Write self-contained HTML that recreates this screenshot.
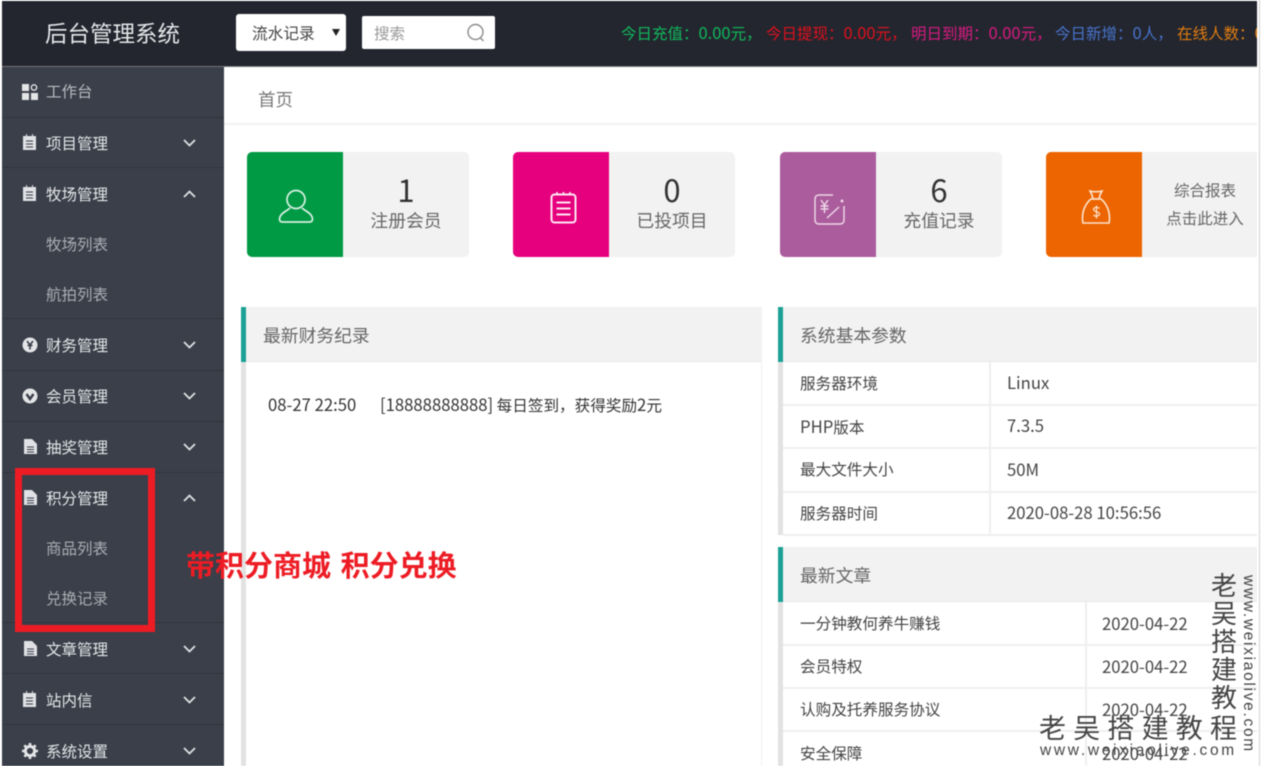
<!DOCTYPE html>
<html lang="zh-CN">
<head>
<meta charset="utf-8">
<title>后台管理系统</title>
<style>
html,body{margin:0;padding:0;background:#fff;width:1264px;height:766px;overflow:hidden}
body{position:relative;font-family:"Liberation Sans","Noto Sans CJK SC",sans-serif;color:#444;filter:blur(.4px)}
.a{position:absolute;white-space:nowrap}
.cjk{font-family:"Noto Sans CJK SC","Liberation Sans",sans-serif}
#side{left:2px;top:67px;width:222px;height:699px;background:#3a3f49}
.sep{position:absolute;left:2px;width:222px;height:1px;background:#31353e}
.m{position:absolute;left:46px;font-size:15.5px;line-height:20px;color:#e4e6e9;font-family:"Noto Sans CJK SC",sans-serif;white-space:nowrap}
.s{color:#a9adb3}
.ic{position:absolute;left:22px}
.ch{position:absolute;left:183px}
.card{position:absolute;top:152px;height:105px;width:222px;background:#f2f2f2;border-radius:5px;overflow:hidden}
.card .c{position:absolute;left:0;top:0;width:96px;height:105px}
.num{position:absolute;left:96px;width:126px;top:19px;text-align:center;font-size:31px;line-height:36px;color:#333;font-family:"Noto Sans CJK SC",sans-serif}
.lab{position:absolute;left:96px;width:126px;top:56px;text-align:center;font-size:17.8px;line-height:24px;color:#666;font-family:"Noto Sans CJK SC",sans-serif}
.ph{position:absolute;height:54px;top:307px;background:#f2f2f2;border-bottom:1px solid #e8e8e8}
.tb{position:absolute;width:5px;background:#1aa094}
.gb{position:absolute;width:5px;background:#e2e2e2}
.pt{position:absolute;font-size:17.8px;line-height:24px;color:#666;font-family:"Noto Sans CJK SC",sans-serif;white-space:nowrap}
.hl{position:absolute;height:2px;background:#efefef}
.vl{position:absolute;width:2px;background:#efefef}
.t{position:absolute;font-size:15.6px;line-height:20px;color:#444;white-space:nowrap;font-family:"Noto Sans CJK SC",sans-serif}
.n{font-size:16.7px}
.st{position:absolute;top:21px;font-size:15.5px;line-height:22px;white-space:nowrap;font-family:"Noto Sans CJK TC",sans-serif}
.st b{font-weight:400;font-size:16.5px}
.wm{position:absolute;color:#444;white-space:nowrap;font-family:"Noto Sans CJK SC",sans-serif}
</style>
</head>
<body>
<!-- header -->
<div class="a" style="left:2px;top:1px;width:1255px;height:65px;background:#23262f;border-bottom:1px solid #777"></div>
<div class="a cjk" style="left:45px;top:17px;font-size:22.5px;line-height:32px;color:#e6e7e9">后台管理系统</div>
<div class="a" style="left:236px;top:14px;width:110px;height:37px;background:#fff;border-radius:3px"></div>
<div class="a cjk" style="left:252px;top:22px;font-size:15.7px;line-height:22px;color:#444">流水记录</div>
<svg class="a" style="left:332px;top:29px" width="8" height="7"><path d="M0 0H8L4 7Z" fill="#222"/></svg>
<div class="a" style="left:362px;top:16px;width:133px;height:33px;background:#fff;border-radius:2px"></div>
<div class="a cjk" style="left:374px;top:23px;font-size:15.5px;line-height:20px;color:#999">搜索</div>
<svg class="a" style="left:466px;top:22px" width="20" height="21" fill="none" stroke="#8c8c8c" stroke-width="1.4"><circle cx="9.5" cy="10" r="7.5"/><path d="M14.5 16l3 3"/></svg>
<div class="st" style="left:621px;color:#11b85c">今日充值：<b>0.00</b>元，</div>
<div class="st" style="left:766px;color:#e0101c">今日提现：<b>0.00</b>元，</div>
<div class="st" style="left:911px;color:#d81a80">明日到期：<b>0.00</b>元，</div>
<div class="st" style="left:1055px;color:#4874cc">今日新增：<b>0</b>人，</div>
<div class="a" style="left:1177px;top:21px;width:80px;height:22px;overflow:hidden"><div class="st" style="left:0;top:0;color:#e07c10">在线人数：<b>0</b>人</div></div>

<!-- sidebar -->
<div class="a" id="side"></div>
<div class="sep" style="top:117px"></div><div class="sep" style="top:167px"></div><div class="sep" style="top:318px"></div><div class="sep" style="top:370px"></div><div class="sep" style="top:421px"></div><div class="sep" style="top:472px"></div><div class="sep" style="top:622px"></div><div class="sep" style="top:673px"></div><div class="sep" style="top:724px"></div>

<svg class="ic" style="top:84px" width="16" height="16" fill="#e4e5e7"><rect x="0" y="0" width="7" height="7"/><circle cx="12" cy="3.5" r="2.7" fill="none" stroke="#e4e5e7" stroke-width="1.4"/><rect x="0" y="9" width="7" height="7"/><rect x="9" y="9" width="7" height="7"/></svg>
<div class="m s" style="top:81px;color:#b8bbc0">工作台</div>

<svg class="ic" style="top:134px" width="15" height="16"><path d="M1 2H14V16H1Z M4 0h1v3H4z M10 0h1v3h-1z" fill="#dfe1e4"/><path d="M4 7h7M4 10h7M4 13h7" stroke="#3a3f49"/></svg>
<div class="m" style="top:133px">项目管理</div>
<svg class="ch" style="top:139px" width="13" height="8" fill="none" stroke="#dfe1e4" stroke-width="1.8"><path d="M1 1l5.5 5.500L12 1"/></svg>

<svg class="ic" style="top:185px" width="15" height="16"><path d="M1 2H14V16H1Z M4 0h1v3H4z M10 0h1v3h-1z" fill="#dfe1e4"/><path d="M4 7h7M4 10h7M4 13h7" stroke="#3a3f49"/></svg>
<div class="m" style="top:184px">牧场管理</div>
<svg class="ch" style="top:190px" width="13" height="8" fill="none" stroke="#dfe1e4" stroke-width="1.8"><path d="M1 7l5.500-5.500L12 7"/></svg>

<div class="m s" style="top:234px">牧场列表</div>
<div class="m s" style="top:284px">航拍列表</div>

<svg class="ic" style="top:337px" width="16" height="16"><circle cx="8" cy="8" r="7.5" fill="#e4e5e7"/><path d="M5 4l3 4 3-4M8 8v4.500M5.500 8.500h5" fill="none" stroke="#3a3f49" stroke-width="1.6"/></svg>
<div class="m" style="top:335px">财务管理</div>
<svg class="ch" style="top:341px" width="13" height="8" fill="none" stroke="#dfe1e4" stroke-width="1.8"><path d="M1 1l5.500 5.500L12 1"/></svg>

<svg class="ic" style="top:388px" width="16" height="16"><circle cx="8" cy="8" r="7.5" fill="#e4e5e7"/><path d="M4.500 6l3.500 5 3.500-5" fill="none" stroke="#3a3f49" stroke-width="2.4"/></svg>
<div class="m" style="top:386px">会员管理</div>
<svg class="ch" style="top:392px" width="13" height="8" fill="none" stroke="#dfe1e4" stroke-width="1.8"><path d="M1 1l5.500 5.500L12 1"/></svg>

<svg class="ic" style="top:439px;left:24px" width="13" height="15"><path d="M0 0H8L13 5V15H0Z" fill="#dfe1e4"/><path d="M3 8h7M3 10.500h7M3 13h7" stroke="#3a3f49"/></svg>
<div class="m" style="top:437px">抽奖管理</div>
<svg class="ch" style="top:443px" width="13" height="8" fill="none" stroke="#dfe1e4" stroke-width="1.8"><path d="M1 1l5.500 5.500L12 1"/></svg>

<svg class="ic" style="top:490px;left:24px" width="13" height="15"><path d="M0 0H8L13 5V15H0Z" fill="#dfe1e4"/><path d="M3 8h7M3 10.500h7M3 13h7" stroke="#3a3f49"/></svg>
<div class="m" style="top:488px">积分管理</div>
<svg class="ch" style="top:494px" width="13" height="8" fill="none" stroke="#dfe1e4" stroke-width="1.8"><path d="M1 7l5.500-5.500L12 7"/></svg>

<div class="m s" style="top:538px">商品列表</div>
<div class="m s" style="top:588px">兑换记录</div>

<svg class="ic" style="top:641px;left:24px" width="13" height="15"><path d="M0 0H8L13 5V15H0Z" fill="#dfe1e4"/><path d="M3 8h7M3 10.500h7M3 13h7" stroke="#3a3f49"/></svg>
<div class="m" style="top:639px">文章管理</div>
<svg class="ch" style="top:645px" width="13" height="8" fill="none" stroke="#dfe1e4" stroke-width="1.8"><path d="M1 1l5.500 5.500L12 1"/></svg>

<svg class="ic" style="top:691px" width="15" height="16"><path d="M1 2H14V16H1Z M4 0h1v3H4z M10 0h1v3h-1z" fill="#dfe1e4"/><path d="M4 7h7M4 10h7M4 13h7" stroke="#3a3f49"/></svg>
<div class="m" style="top:690px">站内信</div>
<svg class="ch" style="top:696px" width="13" height="8" fill="none" stroke="#dfe1e4" stroke-width="1.8"><path d="M1 1l5.500 5.500L12 1"/></svg>

<svg class="ic" style="top:743px" width="16" height="16"><circle cx="8" cy="8" r="4.600" fill="none" stroke="#e4e5e7" stroke-width="3"/><path d="M8 0v16M0 8h16M2.300 2.300l11.400 11.400M13.700 2.300L2.300 13.700" stroke="#e4e5e7" stroke-width="2.600" stroke-dasharray="2.600 10.800"/></svg>
<div class="m" style="top:741px">系统设置</div>
<svg class="ch" style="top:747px" width="13" height="8" fill="none" stroke="#dfe1e4" stroke-width="1.8"><path d="M1 1l5.500 5.500L12 1"/></svg>

<!-- red annotation -->
<div class="a" style="left:15px;top:468px;width:126px;height:150px;border:7px solid #ed1c24"></div>
<div class="a cjk" style="left:186px;top:544px;font-size:29px;line-height:40px;font-weight:700;color:#ed1c24;word-spacing:3px;z-index:3">带积分商城 积分兑换</div>

<!-- breadcrumb -->
<div class="a cjk" style="left:258px;top:87px;font-size:17.5px;line-height:26px;color:#777">首页</div>
<div class="a" style="left:224px;top:123px;width:1033px;height:2px;background:#f1f1f1"></div>

<!-- stat cards -->
<div class="card" style="left:247px"><div class="c" style="background:#009a44"></div>
<svg class="a" style="left:31px;top:36px" width="36" height="36" fill="none" stroke="#d8f0e2" stroke-width="1.700"><circle cx="18" cy="11.500" r="9"/><path d="M12 20c-3 3-10 5-10.500 11 0 2 1 3 3 3h27c2 0 3-1 3-3-.5-6-7.500-8-10.500-11"/></svg>
<div class="num">1</div><div class="lab">注册会员</div></div>

<div class="card" style="left:513px"><div class="c" style="background:#e6007e"></div>
<svg class="a" style="left:37px;top:39px" width="27" height="33" fill="none" stroke="#fde6f3" stroke-width="2"><rect x="1.500" y="3.500" width="24" height="28" rx="3"/><path d="M6.500 11.500h14M6.500 17.500h14M6.500 23.500h14"/><path d="M7 1v3M13.500 1v3M20 1v3" stroke-width="1.600"/></svg>
<div class="num">0</div><div class="lab">已投项目</div></div>

<div class="card" style="left:780px"><div class="c" style="background:#ab5c9c"></div>
<svg class="a" style="left:34px;top:42px" width="32" height="31" fill="none" stroke="#ecd5e7" stroke-width="1.500"><path d="M19 1H5C2.500 1 1 2.500 1 5v21c0 2.500 1.500 4 4 4h21c2.500 0 4-1.500 4-4V12"/><path d="M7 6l3.500 5L14 6M6.500 12h8M6.500 15h8M10.500 11v8M13 24l12-11"/><circle cx="28" cy="7" r=".7"/></svg>
<div class="num">6</div><div class="lab">充值记录</div></div>

<div class="a" style="left:1046px;top:152px;width:211px;height:105px;overflow:hidden"><div class="card" style="left:0;top:0"><div class="c" style="background:#ec6500"></div>
<svg class="a" style="left:35px;top:38px" width="30" height="35" fill="none" stroke="#fde3cf" stroke-width="1.600"><path d="M10 9c-5 4-8.500 11-8.500 19 0 3 .5 5 .5 5h26s.5-2 .5-5c0-8-3.500-15-8.500-19z"/><path d="M9 1c2 1 9 1 12 0l-2 4-1 4h-6l-1-4z"/><path d="M18.500 18.500c-1-1.500-6-1.500-6 1s6 2 6 4.500-5 2.500-6 1M15.500 15.500v13" stroke-width="1.200"/></svg>
<div class="a cjk" style="left:96px;width:126px;top:26px;text-align:center;font-size:15.500px;line-height:24px;color:#666;white-space:normal">综合报表</div>
<div class="a cjk" style="left:96px;width:126px;top:54px;text-align:center;font-size:15.500px;line-height:24px;color:#666;white-space:normal">点击此进入</div></div></div>

<!-- left panel -->
<div class="ph" style="left:241px;width:520px"></div>
<div class="tb" style="left:241px;top:307px;height:55px"></div>
<div class="gb" style="left:241px;top:362px;height:404px"></div>
<div class="a" style="left:761px;top:307px;width:1px;height:459px;background:#f0f0f0"></div>
<div class="pt" style="left:263px;top:323px">最新财务纪录</div>
<div class="t n" style="left:268px;top:394px;color:#333">08-27 22:50</div>
<div class="t" style="left:380px;top:394px;color:#333"><span class="n">[18888888888]</span> 每日签到<span style="font-family:'Noto Sans CJK TC',sans-serif">，</span>获得奖励<span class="n">2</span>元</div>

<!-- right panel 1 -->
<div class="ph" style="left:778px;width:479px"></div>
<div class="tb" style="left:778px;top:307px;height:55px"></div>
<div class="gb" style="left:778px;top:362px;height:173px"></div>
<div class="pt" style="left:800px;top:323px">系统基本参数</div>
<div class="hl" style="left:783px;width:474px;top:404px"></div>
<div class="hl" style="left:783px;width:474px;top:447px"></div>
<div class="hl" style="left:783px;width:474px;top:491px"></div>
<div class="hl" style="left:783px;width:474px;top:534px"></div>
<div class="vl" style="left:989px;top:362px;height:172px"></div>
<div class="t" style="left:800px;top:373px">服务器环境</div><div class="t n" style="left:1007px;top:372px">Linux</div>
<div class="t" style="left:800px;top:416px"><span class="n">PHP</span>版本</div><div class="t n" style="left:1007px;top:415px">7.3.5</div>
<div class="t" style="left:800px;top:459px">最大文件大小</div><div class="t n" style="left:1007px;top:459px">50M</div>
<div class="t" style="left:800px;top:503px">服务器时间</div><div class="t n" style="left:1007px;top:502px">2020-08-28 10:56:56</div>

<!-- right panel 2 -->
<div class="ph" style="left:778px;top:547px;width:479px"></div>
<div class="tb" style="left:778px;top:547px;height:55px"></div>
<div class="gb" style="left:778px;top:602px;height:164px"></div>
<div class="pt" style="left:800px;top:563px">最新文章</div>
<div class="hl" style="left:783px;width:474px;top:644px"></div>
<div class="hl" style="left:783px;width:474px;top:687px"></div>
<div class="hl" style="left:783px;width:474px;top:730px"></div>
<div class="vl" style="left:1085px;top:602px;height:164px"></div>
<div class="t" style="left:800px;top:613px">一分钟教何养牛赚钱</div><div class="t n" style="left:1102px;top:613px">2020-04-22</div>
<div class="t" style="left:800px;top:656px">会员特权</div><div class="t n" style="left:1102px;top:656px">2020-04-22</div>
<div class="t" style="left:800px;top:699px">认购及托养服务协议</div><div class="t n" style="left:1102px;top:699px">2020-04-22</div>
<div class="t" style="left:800px;top:743px">安全保障</div><div class="t n" style="left:1102px;top:743px">2020-04-22</div>

<!-- right scrollbar line -->
<div class="a" style="left:1257px;top:0;width:2px;height:766px;background:#fff"></div>
<div class="a" style="left:1259px;top:0;width:1px;height:766px;background:#d0d0d0"></div>

<!-- watermark -->
<div class="wm" style="left:1039px;top:709px;font-size:27px;line-height:36px;letter-spacing:7.200px">老吴搭建教程</div>
<div class="wm" style="left:1040px;top:740px;font-size:15.500px;line-height:22px;letter-spacing:2.700px;font-family:'Liberation Sans',sans-serif">www.weixiaolive.com</div>
<div class="wm" style="left:1211px;top:571px;width:28px;font-size:26px;line-height:28px;white-space:normal">老吴搭建教</div>
<div class="wm" style="left:1237px;top:575px;height:185px;font-size:15.500px;line-height:22px;letter-spacing:1.700px;writing-mode:vertical-rl;font-family:'Liberation Sans',sans-serif">www.weixiaolive.com</div>
</body>
</html>
